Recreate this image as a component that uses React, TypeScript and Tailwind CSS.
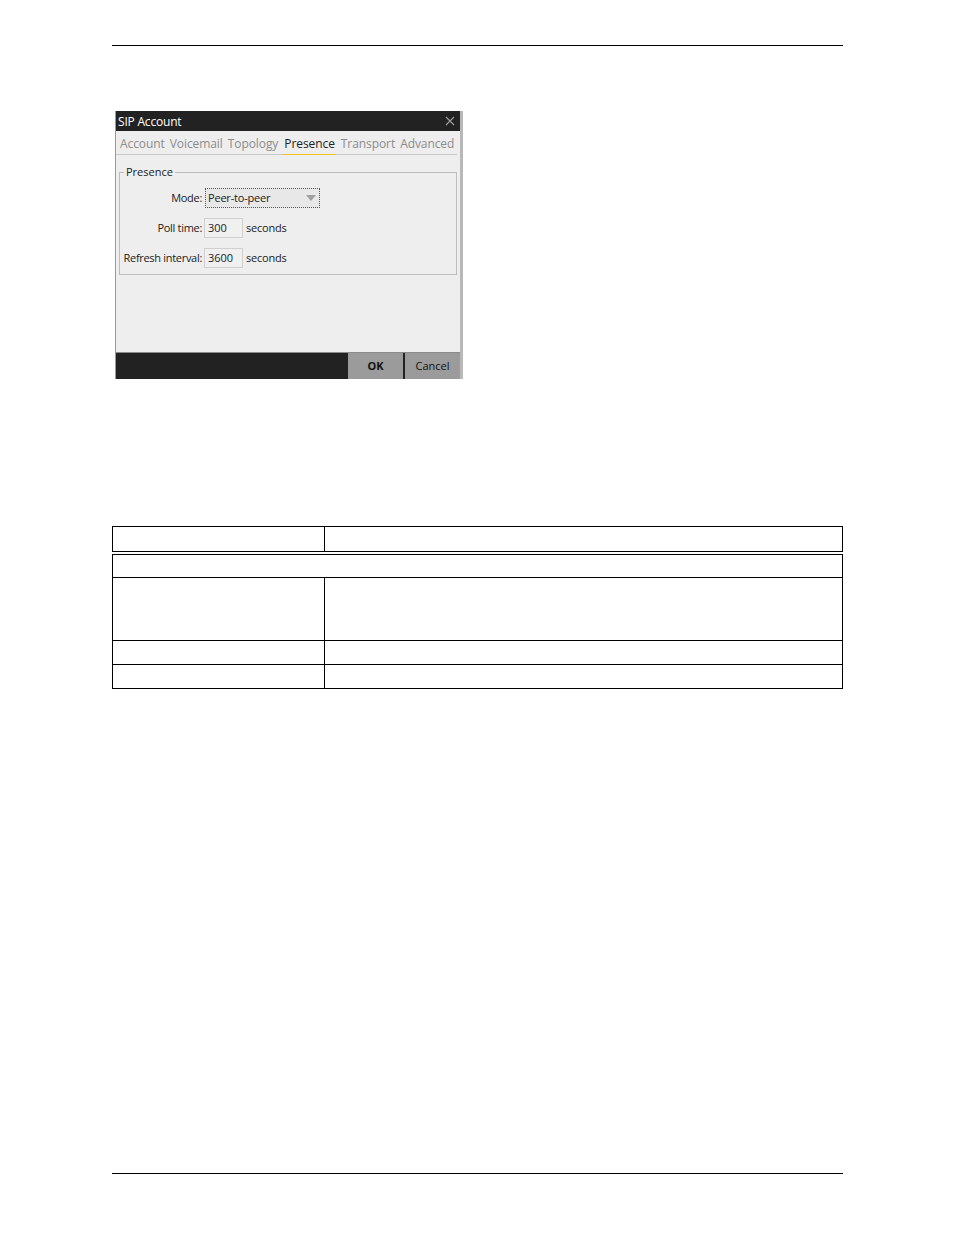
import React from "react";

const font = { fontFamily: '"Open Sans", "Noto Sans", sans-serif' };

function Tabs() {
  const tabs = ["Account", "Voicemail", "Topology", "Presence", "Transport", "Advanced"];
  return (
    <div className="flex h-[24px] items-end gap-[5px] border-b border-[#c9c9c9] pl-[4px] mr-[3px] tracking-[-0.08px]">
      {tabs.map((t) => (
        <div
          key={t}
          className={
            t === "Presence"
              ? "relative h-full pt-[5px] px-[1px] text-[12px] leading-[16px] text-[#222]"
              : "h-full pt-[5px] text-[12px] leading-[16px] text-[#8c8c8c]"
          }
        >
          {t}
          {t === "Presence" && <div className="absolute bottom-[-1px] left-0 right-0 h-[1px] bg-[#f0c419]" />}
        </div>
      ))}
    </div>
  );
}

function Row({ label, children }: { label: string; children: React.ReactNode }) {
  return (
    <div className="flex items-center">
      <div className="w-[81px] flex justify-end whitespace-nowrap text-[11px] tracking-[-0.3px] text-[#222] pr-[1px]">
        {label}
      </div>
      {children}
    </div>
  );
}

function Dialog() {
  return (
    <div className="ml-[115px] mt-[65px] w-[348px] flex" style={font}>
      <div className="w-[345px] h-[268px] flex flex-col bg-[#eeeeee] border-l border-[#9a9a9a]">
        <div className="h-[20px] bg-[#222222] flex items-center justify-between pl-[2px] pr-[5px]">
          <span className="text-[12px] leading-[16px] pt-[2px] tracking-[-0.2px] text-white">SIP Account</span>
          <svg width="10" height="10" viewBox="0 0 10 10">
            <path d="M1 1 L9 9 M9 1 L1 9" stroke="#9a9a9a" strokeWidth="1.2" />
          </svg>
        </div>
        <Tabs />
        <div className="relative mx-[3px] mt-[17px] h-[103px] border border-[#bdbdbd]">
          <div className="absolute left-[4px] top-[-9px] bg-[#eeeeee] px-[2px] text-[11px] leading-[16px] text-[#222]">
            Presence
          </div>
          <div className="flex flex-col gap-[10px] pt-[15px] pl-[2px]">
            <Row label="Mode:">
              <div className="ml-[2px] w-[115px] h-[20px] border border-dotted border-[#555] bg-[#e8e8e8] flex items-center justify-between px-[2px]">
                <span className="text-[11px] tracking-[-0.2px] text-[#222]">Peer-to-peer</span>
                <svg width="10" height="6" viewBox="0 0 10 6" className="mr-[1px]">
                  <path d="M0 0 L10 0 L5 6 Z" fill="#a0a0a0" />
                </svg>
              </div>
            </Row>
            <Row label="Poll time:">
              <div className="ml-[1px] w-[39px] h-[20px] border border-[#d0d0d0] bg-[#f0f0f0] flex items-center pl-[3px] text-[11px] text-[#222]">
                300
              </div>
              <span className="ml-[3px] text-[11px] tracking-[-0.2px] text-[#222]">seconds</span>
            </Row>
            <Row label="Refresh interval:">
              <div className="ml-[1px] w-[39px] h-[20px] border border-[#d0d0d0] bg-[#f0f0f0] flex items-center pl-[3px] text-[11px] text-[#222]">
                3600
              </div>
              <span className="ml-[3px] text-[11px] tracking-[-0.2px] text-[#222]">seconds</span>
            </Row>
          </div>
        </div>
        <div className="flex-1" />
        <div className="h-[27px] bg-[#222222] border-t border-[#8a8a8a] flex justify-end">
          <div className="w-[55px] bg-[#9b9b9b] flex items-center justify-center text-[11px] font-bold text-[#111]">OK</div>
          <div className="w-[2px] bg-[#222222]" />
          <div className="w-[55px] bg-[#9b9b9b] flex items-center justify-center text-[11px] text-[#111]">Cancel</div>
        </div>
      </div>
      <div className="w-[3px] h-[268px] bg-[#b8b8b8]" />
    </div>
  );
}

function DataTable() {
  const cell = "border-[1.5px] border-black";
  return (
    <table className="ml-[112px] mt-[147px] w-[731px] border-collapse border-[1.5px] border-black">
      <tbody>
        <tr className="h-[26px]">
          <td className={`${cell} w-[212px] border-b-[4px] border-double`}></td>
          <td className={`${cell} border-b-[4px] border-double`}></td>
        </tr>
        <tr className="h-[25px]">
          <td className={cell} colSpan={2}></td>
        </tr>
        <tr className="h-[63px]">
          <td className={cell}></td>
          <td className={cell}></td>
        </tr>
        <tr className="h-[24px]">
          <td className={cell}></td>
          <td className={cell}></td>
        </tr>
        <tr className="h-[24px]">
          <td className={cell}></td>
          <td className={cell}></td>
        </tr>
      </tbody>
    </table>
  );
}

export default function App() {
  return (
    <div className="w-[954px] h-[1235px] bg-white flex flex-col">
      <div className="ml-[112px] mt-[45px] w-[731px] h-[1px] bg-black" />
      <Dialog />
      <DataTable />
      <div className="flex-1" />
      <div className="ml-[112px] mb-[61px] w-[731px] h-[1px] bg-black" />
    </div>
  );
}
